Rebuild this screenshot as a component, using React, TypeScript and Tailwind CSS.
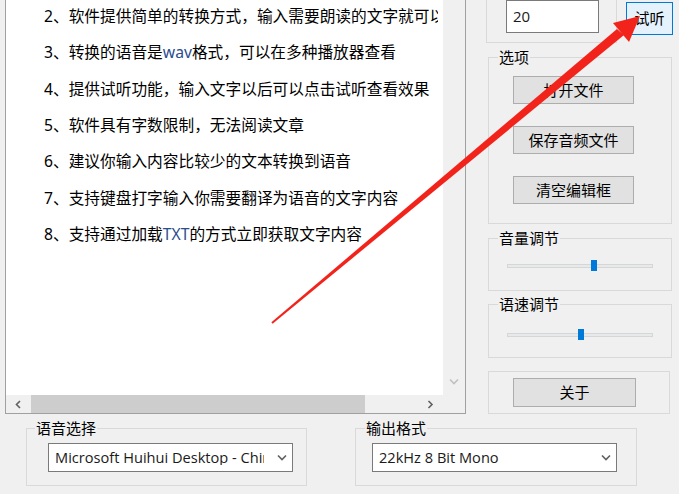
import React from "react";

const lines: React.ReactNode[] = [
  "2、软件提供简单的转换方式，输入需要朗读的文字就可以转换成语音",
  <>3、转换的语音是<span className="text-[#2a4d8f]">wav</span>格式，可以在多种播放器查看</>,
  "4、提供试听功能，输入文字以后可以点击试听查看效果",
  "5、软件具有字数限制，无法阅读文章",
  "6、建议你输入内容比较少的文本转换到语音",
  "7、支持键盘打字输入你需要翻译为语音的文字内容",
  <>8、支持通过加载<span className="text-[#2a4d8f]">TXT</span>的方式立即获取文字内容</>,
];

const Chevron = ({ dir, className }: { dir: "down" | "left" | "right"; className?: string }) => {
  const d = dir === "down" ? "M1 1.5 L5 5.5 L9 1.5" : dir === "left" ? "M5 1 L1.5 4.5 L5 8" : "M1.5 1 L5 4.5 L1.5 8";
  const w = dir === "down" ? 10 : 7;
  const h = dir === "down" ? 7 : 9;
  return (
    <svg width={w} height={h} viewBox={`0 0 ${w} ${h}`} className={className}>
      <path d={d} fill="none" stroke="currentColor" strokeWidth="1.6" />
    </svg>
  );
};

const Btn = ({ label, className = "" }: { label: string; className?: string }) => (
  <div className={`flex items-center justify-center bg-[#e1e1e1] border border-[#adadad] text-[15px] leading-none text-black ${className}`}>
    {label}
  </div>
);

const Slider = ({ thumb, className = "" }: { thumb: number; className?: string }) => (
  <div className={`relative ml-[18px] w-[146px] h-[4px] bg-[#e7eaea] border border-[#d6d6d6] ${className}`}>
    <div className="absolute top-[-5px] w-[6px] h-[11px] bg-[#007ad9]" style={{ left: thumb }} />
  </div>
);

const Combo = ({ text, className = "" }: { text: string; className?: string }) => (
  <div className={`flex items-center h-[29px] w-[245px] bg-white border border-[#7a7a7a] pl-[6px] pr-[5px] ${className}`}>
    <span className="w-[209px] flex-none overflow-hidden whitespace-nowrap text-[14.6px] leading-none text-[#1a1a1a] font-['Open_Sans','Noto_Sans_CJK_SC',sans-serif]">
      {text}
    </span>
    <Chevron dir="down" className="ml-auto text-[#606060] shrink-0" />
  </div>
);

export default function App() {
  return (
    <div className="relative w-[679px] h-[494px] bg-[#f0f0f0] overflow-hidden font-['Noto_Sans','Noto_Sans_CJK_SC',sans-serif] text-black">
      <div className="flex h-[420px]">
        {/* text box */}
        <div className="ml-[5px] w-[461px] shrink-0 h-[414px] flex flex-col border-x border-b border-[#a0a0a0]">
          <div className="flex flex-1 min-h-0">
            <div className="flex-1 min-w-0 bg-white pl-[38px] pr-[5px]">
              <div className="h-full overflow-hidden">
                <div className="-mt-[2px] text-[15.7px] leading-[36.33px] whitespace-nowrap">
                  {lines.map((l, i) => (
                    <div key={i}>{l}</div>
                  ))}
                </div>
              </div>
            </div>
            <div className="w-[22px] shrink-0 flex flex-col justify-end items-center pb-[10px]">
              <Chevron dir="down" className="text-[#c0c0c0]" />
            </div>
          </div>
          <div className="h-[18px] flex items-center">
            <div className="w-[24px] flex justify-center">
              <Chevron dir="left" className="text-[#606060]" />
            </div>
            <div className="ml-[1px] w-[334px] h-full bg-[#cdcdcd]" />
            <div className="w-[56px]" />
            <div className="w-[18px] flex justify-center">
              <Chevron dir="right" className="text-[#606060]" />
            </div>
          </div>
        </div>

        {/* right column */}
        <div className="ml-[20px] flex flex-col w-[193px] shrink-0">
          <div className="flex items-start">
            <div className="w-[131px] h-[43px] border-x border-b border-[#d9d9d9] pl-[19px]">
              <div className="w-[93px] h-[33px] bg-white border border-[#7a7a7a] pl-[6px] flex items-center text-[15px] text-[#1a1a1a] font-['Open_Sans',sans-serif]">
                20
              </div>
            </div>
            <div className="ml-[9px] mt-[2px] w-[47px] h-[33px] flex items-center justify-center bg-[#e5f1fb] border border-[#0078d7] text-[15px] leading-none">
              试听
            </div>
          </div>

          <fieldset className="ml-[2px] mt-[6px] w-[184px] h-[175px] border border-[#d9d9d9]">
            <legend className="ml-[9px] px-[1px] text-[15px] leading-[16px]">选项</legend>
            <Btn label="打开文件" className="ml-[24px] mt-[11px] w-[121px] h-[28px]" />
            <Btn label="保存音频文件" className="ml-[24px] mt-[22px] w-[121px] h-[28px]" />
            <Btn label="清空编辑框" className="ml-[24px] mt-[22px] w-[121px] h-[28px]" />
          </fieldset>

          <fieldset className="ml-[2px] mt-[6px] w-[184px] h-[61px] border border-[#d9d9d9]">
            <legend className="ml-[9px] px-[1px] text-[15px] leading-[16px]">音量调节</legend>
            <Slider thumb={83} className="mt-[18px]" />
          </fieldset>

          <fieldset className="ml-[2px] mt-[5px] w-[184px] h-[62px] border border-[#d9d9d9]">
            <legend className="ml-[9px] px-[1px] text-[15px] leading-[16px]">语速调节</legend>
            <Slider thumb={70} className="mt-[21px]" />
          </fieldset>

          <div className="ml-[2px] mt-[13px] w-[182px] h-[43px] border border-[#d9d9d9]">
            <Btn label="关于" className="ml-[24px] mt-[6px] w-[123px] h-[29px]" />
          </div>
        </div>
      </div>

      {/* bottom groups */}
      <div className="flex">
        <fieldset className="ml-[26px] w-[281px] h-[66px] border border-[#d9d9d9]">
          <legend className="ml-[8px] px-[1px] text-[15px] leading-[16px]">语音选择</legend>
          <Combo text="Microsoft Huihui Desktop - Chinese (Simplified)" className="ml-[21px] mt-[7px]" />
        </fieldset>
        <fieldset className="ml-[48px] w-[282px] h-[66px] border border-[#d9d9d9]">
          <legend className="ml-[9px] px-[1px] text-[15px] leading-[16px]">输出格式</legend>
          <Combo text="22kHz 8 Bit Mono" className="ml-[16px] mt-[7px]" />
        </fieldset>
      </div>

      {/* red annotation arrow */}
      <svg className="absolute inset-0 pointer-events-none" width="679" height="494" viewBox="0 0 679 494">
        <polygon points="271.4,322.2 272.6,323.8 624,35 617,29" fill="#f2231b" />
        <polygon points="640,16 613,23 629,42" fill="#f2231b" />
      </svg>
    </div>
  );
}
